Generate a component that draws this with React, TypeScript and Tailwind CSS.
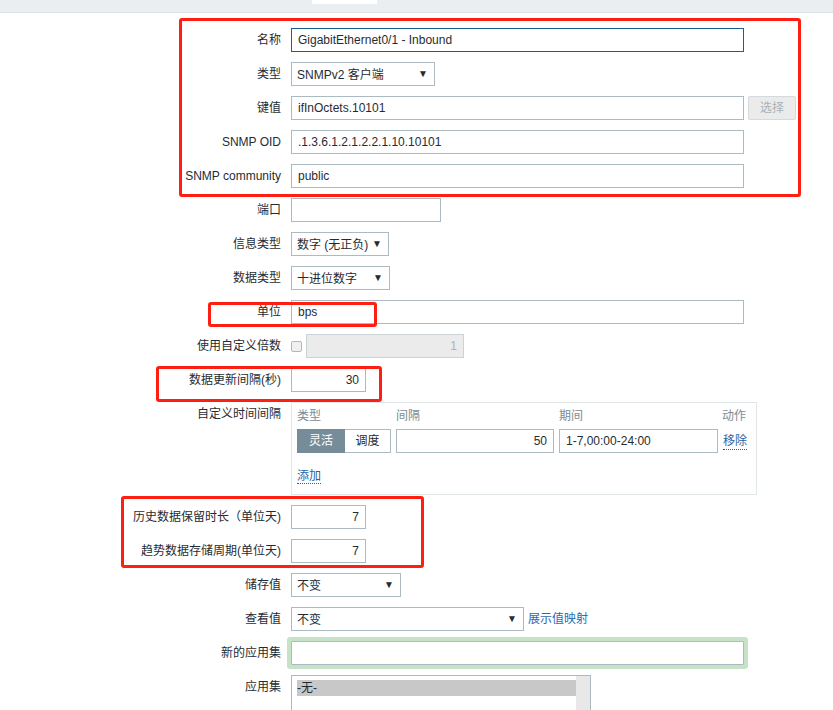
import React from 'react';

const font = "[font-family:'Liberation_Sans','Noto_Sans_CJK_SC',sans-serif]";

const Label = ({ children }: { children: React.ReactNode }) => (
  <div className="w-[281px] shrink-0 text-right text-[12px] leading-[24px] text-[#1f2c33] whitespace-nowrap">
    {children}
  </div>
);

const Input = ({
  value = '',
  w = 'w-[453px]',
  right = false,
  tone = 'border-[#acbbc2] bg-white text-[#1f2c33]',
  className = '',
}: {
  value?: string;
  w?: string;
  right?: boolean;
  tone?: string;
  className?: string;
}) => (
  <div
    className={`${w} ${tone} h-[24px] border px-[6px] text-[12px] leading-[22px] whitespace-nowrap overflow-hidden ${
      right ? 'text-right' : ''
    } ${className}`}
  >
    {value}
  </div>
);

const Select = ({ value, w }: { value: string; w: string }) => (
  <div
    className={`${w} h-[24px] border border-[#acbbc2] bg-white pl-[5px] pr-[6px] flex items-center justify-between text-[12px] text-[#1f2c33]`}
  >
    <span className="whitespace-nowrap pt-[1px]">{value}</span>
    <span className="text-[10px] leading-none text-[#1f2c33]">▼</span>
  </div>
);

const Row = ({ label, children }: { label: React.ReactNode; children: React.ReactNode }) => (
  <div className="flex items-start gap-[10px]">
    <Label>{label}</Label>
    <div className="flex items-center gap-[4px]">{children}</div>
  </div>
);

const Mark = ({ className }: { className: string }) => (
  <div className={`absolute border-[3px] border-[#ff1e12] rounded-[3px] pointer-events-none ${className}`} />
);

export default function App() {
  return (
    <div className={`relative w-[833px] h-[710px] overflow-hidden bg-white ${font}`}>
      <div className="h-[13px] bg-[#ebeef0] border-b border-[#dfe3e6] pl-[312px]">
        <div className="w-[65px] h-[4px] bg-white" />
      </div>

      <div className="pt-[15px] flex flex-col gap-[10px]">
        <Row label="名称">
          <Input value="GigabitEthernet0/1 - Inbound" tone="border-[#1d5f8f] bg-white text-[#1f2c33]" />
        </Row>
        <Row label="类型">
          <Select value="SNMPv2 客户端" w="w-[144px]" />
        </Row>
        <Row label="键值">
          <Input value="ifInOctets.10101" />
          <div className="w-[48px] h-[24px] border border-[#d3dadd] bg-[#ebebeb] rounded-[2px] text-center text-[12px] leading-[22px] text-[#a8b2b7]">
            选择
          </div>
        </Row>
        <Row label="SNMP OID">
          <Input value=".1.3.6.1.2.1.2.2.1.10.10101" />
        </Row>
        <Row label="SNMP community">
          <Input value="public" />
        </Row>
        <Row label="端口">
          <Input w="w-[150px]" />
        </Row>
        <Row label="信息类型">
          <Select value="数字 (无正负)" w="w-[98px]" />
        </Row>
        <Row label="数据类型">
          <Select value="十进位数字" w="w-[99px]" />
        </Row>
        <Row label="单位">
          <Input value="bps" />
        </Row>
        <Row label="使用自定义倍数">
          <div className="w-[11px] h-[11px] mt-[1px] border border-[#acbbc2] bg-[#f0f0f0] rounded-[2px]" />
          <Input value="1" w="w-[158px]" right tone="border-[#cbd3d7] bg-[#ebebeb] text-[#a8b5bb]" />
        </Row>
        <Row label="数据更新间隔(秒)">
          <Input value="30" w="w-[75px]" right />
        </Row>
        <Row label="自定义时间间隔">
          <div className="w-[466px] h-[93px] border border-[#e1e6e9] px-[5px] pt-[3px]">
            <div className="flex text-[12px] leading-[20px] text-[#7b8a93]">
              <span className="w-[99px]">类型</span>
              <span className="w-[163px]">间隔</span>
              <span className="w-[163px]">期间</span>
              <span>动作</span>
            </div>
            <div className="mt-[3px] flex items-center">
              <div className="flex w-[94px] h-[24px] text-[12px] leading-[22px]">
                <div className="w-[48px] bg-[#768d99] border border-[#768d99] text-white text-center">灵活</div>
                <div className="w-[46px] border border-l-0 border-[#acbbc2] text-[#1f2c33] text-center">调度</div>
              </div>
              <Input value="50" w="w-[158px] ml-[5px]" right />
              <Input value="1-7,00:00-24:00" w="w-[159px] ml-[5px]" />
              <span className="ml-[5px] text-[12px] text-[#1f65a6] border-b border-dotted border-[#1f65a6] leading-[16px]">
                移除
              </span>
            </div>
            <div className="mt-[10px]">
              <span className="text-[12px] text-[#1f65a6] border-b border-dotted border-[#1f65a6] leading-[16px]">
                添加
              </span>
            </div>
          </div>
        </Row>
        <Row label="历史数据保留时长（单位天)">
          <Input value="7" w="w-[75px]" right />
        </Row>
        <Row label="趋势数据存储周期(单位天)">
          <Input value="7" w="w-[75px]" right />
        </Row>
        <Row label="储存值">
          <Select value="不变" w="w-[110px]" />
        </Row>
        <Row label="查看值">
          <Select value="不变" w="w-[233px]" />
          <span className="text-[12px] text-[#2a6ab3]">展示值映射</span>
        </Row>
        <Row label="新的应用集">
          <Input className="shadow-[0_0_0_4px_#c6e2c7] rounded-[1px]" />
        </Row>
        <Row label="应用集">
          <div className="w-[300px] h-[110px] border border-[#acbbc2] bg-white flex">
            <div className="flex-1 pl-[5px] pt-[4px]">
              <div className="h-[16px] bg-[#c8c8c8] text-[12px] leading-[16px] text-[#1f2c33]">-无-</div>
            </div>
            <div className="w-[14px] bg-[#e8e8e8]" />
          </div>
        </Row>
      </div>

      <Mark className="left-[179px] top-[18px] w-[622px] h-[179px]" />
      <Mark className="left-[208px] top-[302px] w-[169px] h-[25px]" />
      <Mark className="left-[156px] top-[366px] w-[226px] h-[36px]" />
      <Mark className="left-[121px] top-[496px] w-[303px] h-[72px]" />
    </div>
  );
}
